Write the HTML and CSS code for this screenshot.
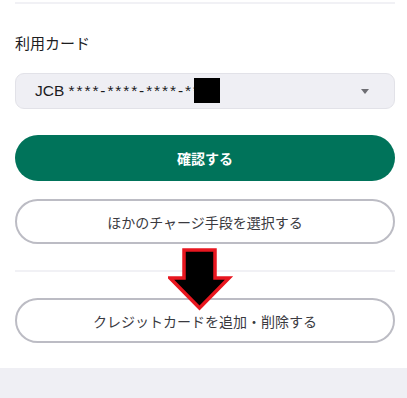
FILE: index.html
```html
<!DOCTYPE html>
<html lang="ja">
<head>
<meta charset="utf-8">
<link rel="stylesheet" href="styles.css">
</head>
<body>
<div class="page">
  <div class="rule rule-top"></div>
  <div class="label">利用カード</div>
  <div class="select">
    <span class="select-text">JCB <span class="digits">****-****-****-**</span><span class="mask"></span></span>
    <svg class="caret" width="8" height="5" viewBox="0 0 8 5"><path d="M0 0H8L4 5Z" fill="#6e6e73"/></svg>
  </div>
  <button class="btn btn-primary">確認する</button>
  <button class="btn btn-outline btn-other">ほかのチャージ手段を選択する</button>
  <div class="rule rule-mid"></div>
  <div class="arrow-wrap">
    <button class="btn btn-outline btn-card">クレジットカードを追加・削除する</button>
    <svg class="arrow" width="70" height="70" viewBox="0 0 70 70">
      <path d="M16 2H47V30H61L31.5 60L2 30H16Z" fill="#000" stroke="#e8161f" stroke-width="3.5" stroke-linejoin="miter"/>
    </svg>
  </div>
</div>
<div class="footer"></div>
</body>
</html>
```
FILE: styles.css
```css
html, body {
  margin: 0;
  padding: 0;
  background: #fff;
}
body {
  width: 407px;
  height: 398px;
  overflow: hidden;
  font-family: "Noto Sans CJK JP", "Noto Sans", sans-serif;
}
.page {
  padding: 0 12px 0 15px;
  height: 368px;
  box-sizing: border-box;
  display: flex;
  flex-direction: column;
}
.rule {
  height: 2px;
  background: #f1f1f5;
}
.rule-top {
  margin-top: 2px;
}
.label {
  margin-top: 28px;
  font-size: 15px;
  line-height: 22px;
  color: #1c1c1e;
}
.select {
  margin-top: 19px;
  height: 36px;
  box-sizing: border-box;
  border: 1.5px solid #e2e2e8;
  border-radius: 9px;
  background: #efeff4;
  display: flex;
  align-items: center;
  justify-content: space-between;
  padding: 0 25px 0 19px;
}
.select-text {
  font-family: "Liberation Sans", "Noto Sans CJK JP", sans-serif;
  font-size: 15.5px;
  color: #1c1c1e;
  display: flex;
  align-items: center;
  white-space: pre;
}
.digits {
  letter-spacing: 1.9px;
}
.mask {
  display: inline-block;
  width: 26px;
  height: 25px;
  background: #000;
  margin-left: -7px;
  margin-top: -2px;
}
.caret {
  display: block;
}
.btn {
  display: block;
  width: 100%;
  box-sizing: border-box;
  font-family: "Noto Sans CJK JP", "Noto Sans", sans-serif;
  font-size: 14px;
  padding: 0;
  border-radius: 23px;
  cursor: pointer;
}
.btn-primary {
  margin-top: 26px;
  height: 46px;
  background: #00735a;
  color: #fff;
  border: none;
  font-weight: 700;
}
.btn-outline {
  height: 45px;
  background: #fff;
  border: 2px solid #bcbcc4;
  color: #3a3a3f;
}
.btn-other {
  margin-top: 18px;
}
.rule-mid {
  margin-top: 26px;
}
.arrow-wrap {
  position: relative;
  margin-top: 26px;
}
.arrow {
  position: absolute;
  left: 153px;
  top: -50px;
}
.footer {
  height: 30px;
  background: #efeff4;
}
```
